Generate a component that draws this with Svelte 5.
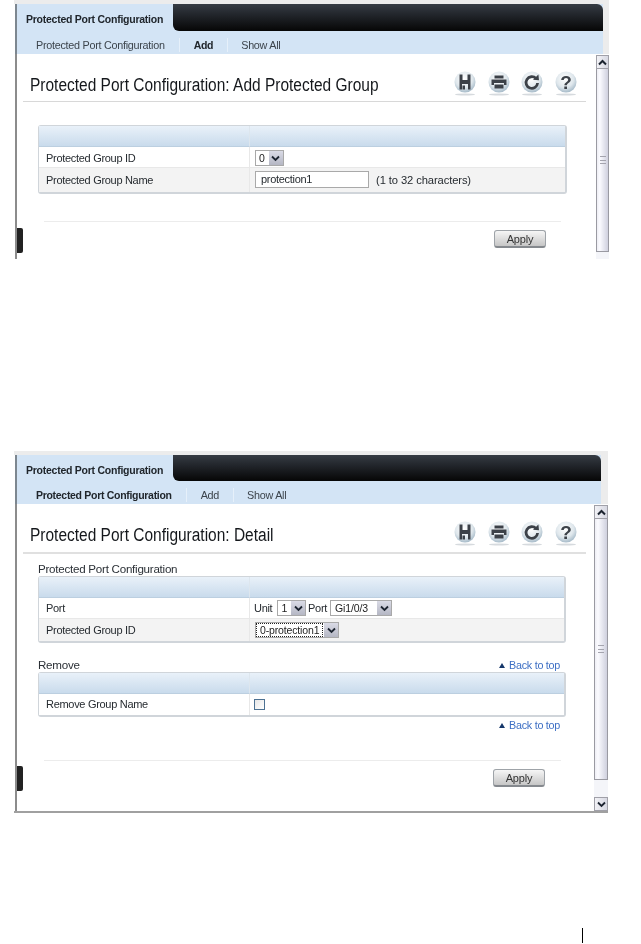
<script>
  const win1Nav = [
    { label: 'Protected Port Configuration' },
    { label: 'Add', active: true },
    { label: 'Show All' }
  ];
  const win2Nav = [
    { label: 'Protected Port Configuration', active: true },
    { label: 'Add' },
    { label: 'Show All' }
  ];
</script>

{#snippet chevron()}
  <svg class="chev" viewBox="0 0 9 7" width="9" height="7"><path d="M1 1.5 4.5 5 8 1.5" fill="none" stroke="#1c2430" stroke-width="1.800"/></svg>
{/snippet}

{#snippet chevronUp()}
  <svg class="chev" viewBox="0 0 9 7" width="9" height="7"><path d="M1 5.5 4.5 2 8 5.5" fill="none" stroke="#1c2430" stroke-width="2"/></svg>
{/snippet}

{#snippet icon(kind)}
  <svg class="icon" viewBox="0 0 24 28" width="24" height="28">
    <ellipse cx="12" cy="24.5" rx="10" ry="1.1" fill="#d6dade"/>
    <circle cx="12" cy="12" r="10.5" fill="url(#orb)"/>
    {#if kind === 'save'}
      <path fill-rule="evenodd" d="M6.500 4.500h11v15h-11zM9.500 4.500v5.500h5V4.500zM9 14v5.500h6V14z" fill="#3c4148"/>
      <path d="M9.500 15.500h2.500v4H9.500z" fill="#3c4148"/>
    {:else if kind === 'print'}
      <path d="M7.500 5.500h9v3h-9zM4.500 9.500h15v5.500h-2.500v-2H7v2H4.500zM7.500 14.500h9V18.500h-9z" fill="#3c4148"/>
    {:else if kind === 'refresh'}
      <path d="M16 8.500A5.800 5.800 0 1 0 17.600 13" fill="none" stroke="#3c4148" stroke-width="2.800"/>
      <path d="M13 9.800 19 10.300 18.400 4.500z" fill="#3c4148"/>
    {:else}
      <text x="12" y="18.500" text-anchor="middle" class="qmark">?</text>
    {/if}
  </svg>
{/snippet}

{#snippet head(items)}
  <div class="head">
    <div class="tab">Protected Port Configuration</div>
    <div class="bar"></div>
  </div>
  <nav class="nav">
    {#each items as item}
      <span class="nav-item" class:active={item.active}>{item.label}</span>
    {/each}
  </nav>
{/snippet}

{#snippet titleRow(text)}
  <div class="title-row">
    <h1>{text}</h1>
    <div class="icons">
      {@render icon('save')}
      {@render icon('print')}
      {@render icon('refresh')}
      {@render icon('help')}
    </div>
  </div>
{/snippet}

{#snippet handle()}
  <div class="handle"></div>
{/snippet}

{#snippet backTop()}
  <a class="back" href="#top"><i></i>Back to top</a>
{/snippet}

<div class="page">
  <section class="win w1">
    <div class="band"></div>
    {@render head(win1Nav)}
    <div class="body">
      <div class="content">
        {@render titleRow('Protected Port Configuration: Add Protected Group')}
        <div class="tbl t1">
          <div class="th"></div><div class="th"></div>
          <div class="td r1">Protected Group ID</div>
          <div class="td r1 val"><span class="sel"><span class="sv">0</span><span class="sb">{@render chevron()}</span></span></div>
          <div class="td r2">Protected Group Name</div>
          <div class="td r2 val"><span class="inp">protection1</span><span class="hint">(1 to 32 characters)</span></div>
        </div>
        <div class="rule-dot"></div>
        <div class="actions"><button>Apply</button></div>
        {@render handle()}
      </div>
      <div class="sbar">
        <div class="sbtn">{@render chevronUp()}</div>
        <div class="thumb"><span class="grip"></span></div>
        <div class="strack"></div>
      </div>
    </div>
  </section>

  <section class="win w2">
    <div class="band"></div>
    {@render head(win2Nav)}
    <div class="body">
      <div class="content">
        {@render titleRow('Protected Port Configuration: Detail')}
        <div class="sec-head first"><span>Protected Port Configuration</span></div>
        <div class="tbl t2">
          <div class="th"></div><div class="th"></div>
          <div class="td r1">Port</div>
          <div class="td r1 val tight">Unit <span class="sel mx"><span class="sv">1</span><span class="sb">{@render chevron()}</span></span>Port <span class="sel mp"><span class="sv wide">Gi1/0/3</span><span class="sb">{@render chevron()}</span></span></div>
          <div class="td r2">Protected Group ID</div>
          <div class="td r2 val"><span class="sel"><span class="sv focus">0-protection1</span><span class="sb">{@render chevron()}</span></span></div>
        </div>
        <div class="sec-head second"><span>Remove</span>{@render backTop()}</div>
        <div class="tbl t3">
          <div class="th"></div><div class="th"></div>
          <div class="td last">Remove Group Name</div>
          <div class="td last val tight"><span class="check"></span></div>
        </div>
        <div class="back-row">{@render backTop()}</div>
        <div class="rule-dot"></div>
        <div class="actions"><button>Apply</button></div>
        {@render handle()}
      </div>
      <div class="sbar">
        <div class="sbtn">{@render chevronUp()}</div>
        <div class="thumb"><span class="grip"></span></div>
        <div class="strack"></div>
        <div class="sbtn">{@render chevron()}</div>
      </div>
    </div>
  </section>

  <div class="page-mark"></div>

  <svg class="defs" width="0" height="0" aria-hidden="true">
    <defs>
      <radialGradient id="orb" cx="0.45" cy="0.35" r="0.75">
        <stop offset="0" stop-color="#ffffff"/>
        <stop offset="0.55" stop-color="#dfe7ec"/>
        <stop offset="1" stop-color="#8fa8ba"/>
      </radialGradient>
    </defs>
  </svg>
</div>

<style>
  :global(body) { margin: 0; background: #fff; }
  .page {
    width: 641px;
    height: 944px;
    overflow: hidden;
    font-family: "Liberation Sans", Arial, sans-serif;
    color: #333;
    font-size: 11px;
  }
  .win { margin-left: 14px; display: flex; flex-direction: column; filter: blur(0.3px); }
  .w1 { width: 595px; height: 259px; --gutter: 6px; }
  .w2 { width: 594px; height: 362px; margin-top: 192px; --gutter: 7px; border-bottom: 2px solid #a0a0a0; box-sizing: border-box; }
  .band { height: 4px; background: #ececec; flex: none; }

  .head {
    flex: none;
    display: flex;
    height: 27px;
    margin-left: 1px;
    border-left: 2px solid #7d8790;
    border-right: var(--gutter) solid #ececec;
    background: #d3e4f5;
  }
  .w2 .head { height: 26px; }
  .tab {
    width: 156px;
    flex: none;
    box-sizing: border-box;
    padding: 3px 0 0 9px;
    line-height: 25px;
    font-weight: bold;
    font-size: 10.500px;
    letter-spacing: -0.250px;
    color: #20262c;
    background: #d3e4f5;
    border-top-left-radius: 4px;
  }
  .bar {
    flex: 1;
    background: linear-gradient(#363c44, #24282e 35%, #060606);
    border-bottom-left-radius: 6px;
    border-top-right-radius: 6px;
  }
  .nav {
    flex: none;
    height: 23px;
    box-sizing: border-box;
    margin-left: 1px;
    border-left: 2px solid #7d8790;
    border-right: var(--gutter) solid #ececec;
    background: #d3e4f5;
    padding: 4px 0 0 5px;
    display: flex;
    align-items: center;
    font-size: 10.800px;
    letter-spacing: -0.270px;
    color: #3c444c;
  }
  .nav-item { padding: 0 14px; border-right: 1px solid #e6f0fa; line-height: 14px; }
  .nav-item:last-child { border-right: 0; margin-left: -1px; }
  .nav-item.active { font-weight: bold; color: #20262c; font-size: 10.500px; letter-spacing: -0.300px; }

  .body {
    flex: 1;
    min-height: 0;
    display: flex;
    margin-left: 1px;
    border-left: 2px solid #8c8c8c;
    background: #fff;
  }
  .content { flex: 1; min-width: 0; position: relative; }

  .title-row {
    margin-left: 6px;
    width: 563px;
    height: 48px;
    box-sizing: border-box;
    padding: 0 8px 0 7px;
    display: flex;
    justify-content: space-between;
    align-items: center;
    border-bottom: 1px solid #d8d8d8;
  }
  .w2 .title-row { height: 50px; border-bottom: 2px solid #e0e0e0; }
  h1 {
    margin: 16px 0 0;
    font-weight: normal;
    font-size: 18px;
    color: #15181c;
    white-space: nowrap;
    transform: scaleX(0.86);
    transform-origin: left center;
  }
  .w2 h1 { margin-top: 14px; }
  .icons { display: flex; gap: 9.700px; margin-top: 12px; }
  .icon { display: block; }
  .qmark { font: bold 19px "Liberation Sans", sans-serif; fill: #3c4148; }
  .defs { position: absolute; }

  .tbl {
    margin-left: 21px;
    display: grid;
    grid-template-columns: 210px 1fr;
    border: 1px solid #d0d5da;
    border-bottom-width: 2px;
    border-right-width: 2px;
    border-radius: 3px;
    box-sizing: border-box;
    width: 529px;
  }
  .w2 .tbl { width: 528px; }
  .t1 { margin-top: 23px; }
  .t2 { margin-top: 0; }
  .th {
    height: 20px;
    background: linear-gradient(#e9f1f9, #c9dbec);
    border-bottom: 1px solid #bccfe0;
  }
  .th + .th { border-left: 1px solid #dde6ee; }
  .td { display: flex; align-items: center; padding-left: 7px; color: #262b30; font-size: 11px; letter-spacing: -0.300px; }
  .val { padding-left: 5px; border-left: 1px solid #e8e8e8; }
  .val.tight { padding-left: 4px; }
  .r1 { height: 20px; background: #fff; }
  .r2 { height: 22px; background: #f3f3f3; border-top: 1px solid #e8e8e8; }
  .t1 .r1 { height: 18px; padding-top: 2px; }
  .t1 .r2 { height: 24px; }
  .last { height: 20px; padding-bottom: 1px; background: #fff; }

  .sel { display: inline-flex; height: 14px; border: 1px solid #a9a9a9; background: #fff; font-size: 10.500px; letter-spacing: -0.150px; color: #222; }
  .mx { margin: 0 2px 0 5px; }
  .mp { margin-left: 3px; }
  .sv { padding: 0 3px; line-height: 14px; }
  .sv.wide { width: 38px; padding-left: 4px; }
  .sv.focus { outline: 1px dotted #222; outline-offset: -1px; padding: 0 4px; }
  .sb { width: 14px; background: linear-gradient(#dadbe6, #b5b7c4); display: flex; align-items: center; justify-content: center; margin-left: 1px; }
  .inp { width: 107px; height: 15px; line-height: 15px; padding-left: 5px; margin-top: -1px; box-sizing: content-box; border: 1px solid #a9a9a9; background: #fff; font-size: 11px; letter-spacing: -0.300px; }
  .hint { margin-left: 7px; font-size: 11.200px; letter-spacing: -0.100px; }
  .check { width: 9px; height: 9px; border: 1px solid #4d7192; background: linear-gradient(135deg, #e6e6e6, #fff); }

  .sec-head { margin: 0 0 0 21px; width: 522px; display: flex; justify-content: space-between; align-items: flex-end; font-size: 11.600px; letter-spacing: -0.250px; color: #2b3036; line-height: 14px; }
  .sec-head.first { height: 22px; }
  .sec-head.second { height: 29px; }
  .back { font-size: 10.800px; letter-spacing: -0.280px; color: #3d6fc4; text-decoration: none; display: inline-flex; align-items: center; }
  .back i { width: 0; height: 0; border: 3px solid transparent; border-top-width: 0; border-bottom: 5px solid #16386b; margin-right: 4px; }
  .back-row { margin-left: 21px; width: 522px; height: 14px; display: flex; justify-content: flex-end; align-items: flex-end; }

  .rule-dot { margin: 27px 0 0 27px; width: 517px; border-top: 1px solid #ececec; }
  .w2 .rule-dot { margin-top: 29px; }
  .actions { margin-top: 8px; width: 529px; display: flex; justify-content: flex-end; }
  .w2 .actions { margin-top: 8px; width: 528px; }
  button {
    width: 52px;
    height: 18px;
    padding: 0;
    border: 1px solid #9ea3a8;
    border-bottom: 2px solid #85898e;
    border-radius: 3px;
    background: linear-gradient(#f6f6f6, #c6c6c6);
    font: 11px "Liberation Sans", sans-serif;
    letter-spacing: -0.200px;
    color: #333;
    box-sizing: border-box;
  }

  .handle {
    position: absolute;
    left: 0;
    top: 174px;
    width: 6px;
    height: 25px;
    border-radius: 0 2px 2px 0;
    background-color: #0c0c0c;
    background-image: radial-gradient(#3c3c3c 0.6px, transparent 0.8px);
    background-size: 2px 2px;
  }
  .w2 .handle { top: 262px; }

  .sbar { flex: none; width: 13px; display: flex; flex-direction: column; background: #f4f5f9; margin-top: 1px; }
  .w2 .sbar { width: 14px; }
  .sbtn {
    flex: none;
    height: 14px;
    box-sizing: border-box;
    border: 1px solid #a0a0a8;
    background: linear-gradient(90deg, #f2f2f6, #d7d8e2);
    display: flex;
    align-items: center;
    justify-content: center;
  }
  .thumb {
    flex: none;
    height: 183px;
    box-sizing: border-box;
    border: 1px solid #9a9aa2;
    border-top: 0;
    background: linear-gradient(90deg, #eeeef4, #fbfbff 25%, #cfd0de);
    display: flex;
    align-items: center;
    justify-content: center;
  }
  .w2 .thumb { height: 261px; }
  .grip { width: 6px; height: 6px; border-top: 1px solid #a4a4ae; border-bottom: 1px solid #a4a4ae; background: linear-gradient(#a4a4ae, #a4a4ae) center / 100% 1px no-repeat; }
  .strack { flex: 1; }

  .page-mark { width: 1px; height: 15px; background: #000; margin: 115px 0 0 582px; }
</style>
